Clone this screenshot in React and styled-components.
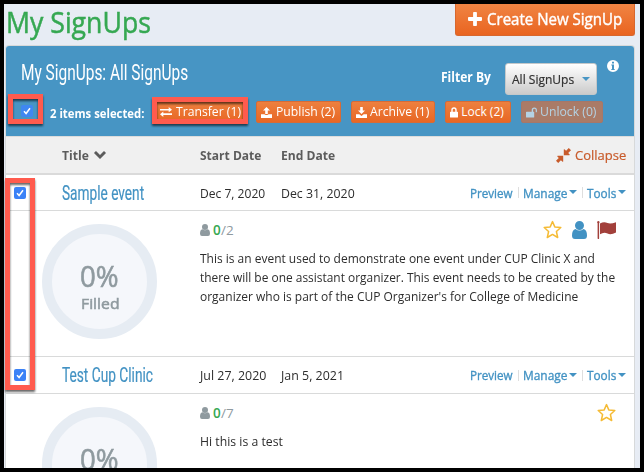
import React, { useLayoutEffect, useRef } from "react";
import styled, { createGlobalStyle } from "styled-components";

const GlobalStyle = createGlobalStyle`
  * { box-sizing: border-box; }
  body { margin: 0; background: #000; font-family: "Open Sans", "Noto Sans", sans-serif; color: #2d2d2d; }
`;

/* ---------- text ---------- */

const TextBox = styled.span`
  display: block;
  flex: none;
  width: ${(p) => p.$w}px;
  height: ${(p) => p.$lh}px;
  line-height: ${(p) => p.$lh}px;
  font-size: ${(p) => p.$size}px;
  font-weight: ${(p) => p.$weight};
  font-family: ${(p) => (p.$display ? '"Roboto", "Open Sans", sans-serif' : '"Open Sans", "Noto Sans", sans-serif')};
  -webkit-text-stroke: ${(p) => p.$stroke || 0}px currentColor;
  color: ${(p) => p.$color || "inherit"};
  white-space: nowrap;
`;

const TextRun = styled.span`
  display: inline-block;
  transform-origin: 0 50%;
`;

/* One line of text condensed to the given width. */
function Label({ w, size = 13, lh = 20, weight = 400, stroke, color, display, children }) {
  const ref = useRef(null);
  useLayoutEffect(() => {
    const el = ref.current;
    const fit = () => {
      el.style.transform = `scaleX(${w / el.offsetWidth})`;
    };
    fit();
    document.fonts.ready.then(fit);
  }, [w, size, children]);
  return (
    <TextBox $w={w} $size={size} $lh={lh} $weight={weight} $stroke={stroke} $color={color} $display={display}>
      <TextRun ref={ref}>{children}</TextRun>
    </TextBox>
  );
}

/* ---------- icons ---------- */

const Svg = styled.svg`
  display: block;
  flex: none;
  fill: currentColor;
`;

const PlusIcon = () => (
  <Svg width="14" height="14" viewBox="0 0 14 14"><path d="M5.100.8Q5.100 0 5.900 0h2.200q.8 0 .8.8v4.300h4.300q.8 0 .8.8v2.200q0 .8-.8.8H8.900v4.300q0 .8-.8.8H5.900q-.8 0-.8-.8V8.900H.8Q0 8.900 0 8.100V5.900q0-.8.8-.8h4.300z" /></Svg>
);
const InfoIcon = () => (
  <Svg width="12" height="12" viewBox="0 0 12 12"><path fillRule="evenodd" d="M6 0a6 6 0 1 1 0 12A6 6 0 0 1 6 0zM5 1.800v1.600h2V1.800zM4.300 4.500v1.100H5v3.300h-.7V10h3.400V8.900H7V4.500z" /></Svg>
);
const TransferIcon = () => (
  <Svg width="12" height="10" viewBox="0 0 12 10"><path d="M0 2h8.700V0L12 2.800 8.700 5.300V3.600H0zM12 6.300H3.300V4.600L0 7.200 3.300 10V8H12z" /></Svg>
);
const UploadIcon = () => (
  <Svg width="11" height="11" viewBox="0 0 11 11"><path d="M5.500 0 9 3.600H6.800V7H4.200V3.600H2zM0 7.300h3.500c.2 1 3.800 1 4 0H11V11H0z" /></Svg>
);
const DownloadIcon = () => (
  <Svg width="11" height="11" viewBox="0 0 11 11"><path d="M4.200 0h2.600v3.400H9L5.500 7 2 3.400h2.200zM0 7.300h3.300L5.500 9l2.200-1.700H11V11H0z" /></Svg>
);
const LockIcon = () => (
  <Svg width="8" height="11" viewBox="0 0 8 11"><path fillRule="evenodd" d="M1.300 4.700V3a2.700 2.700 0 0 1 5.400 0v1.700H7.400q.6 0 .6.600v4.600q0 .6-.6.600H.6q-.6 0-.6-.6V5.300q0-.6.6-.6zM2.700 4.700h2.600V3a1.300 1.300 0 0 0-2.600 0z" /></Svg>
);
const UnlockIcon = () => (
  <Svg width="11" height="11" viewBox="0 0 11 11"><path d="M5.700 4.700V3a2.600 2.600 0 0 1 5.200 0v1.800q0 .5-.6.500t-.6-.5V3a1.300 1.300 0 0 0-2.600 0v1.700h.5q.6 0 .6.600v4.600q0 .6-.6.600h-7q-.6 0-.6-.6V5.300q0-.6.6-.6z" /></Svg>
);
const ChevronIcon = () => (
  <Svg width="12" height="8" viewBox="0 0 12 8"><path d="M6 7.900.2 2.300Q0 2 .2 1.700L1.600.3Q2 .1 2.300.3L6 4 9.700.3q.3-.2.6 0l1.500 1.400q.2.300 0 .6z" /></Svg>
);
const CollapseIcon = () => (
  <Svg width="15" height="15" viewBox="0 0 15 15"><path d="M7.800 7.200V1.600q.4-.6.900-.1l1.400 1.300L12.800 0 15 2.200 12.200 4.900l1.300 1.300q.5.600-.1 1zM7.200 7.800v5.600q-.4.600-.9.100l-1.400-1.300L2.200 15 0 12.800l2.800-2.700L1.500 8.800q-.5-.6.100-1z" /></Svg>
);
const CaretIcon = () => (
  <Svg width="8" height="4" viewBox="0 0 8 4"><path d="M0 0h8L4 4z" /></Svg>
);
const PersonIcon = ({ w, h }) => (
  <Svg width={w} height={h} viewBox="0 0 15 18" preserveAspectRatio="none"><path d="M7.500 0a4.500 4.500 0 1 1 0 9 4.500 4.500 0 0 1 0-9zM3.500 8Q7.500 11 11.500 8 15 8.800 15 14.500 15 18 12 18H3q-3 0-3-3.500Q0 8.800 3.500 8z" /></Svg>
);
const StarIcon = () => (
  <Svg width="19" height="19" viewBox="0 0 19 19"><path fill="none" stroke="currentColor" strokeWidth="1.500" strokeLinejoin="round" d="m9.500 1.600 2.300 5.300 6 .6-4.400 4 1.300 6-5.200-3.100-5.200 3.100 1.300-6-4.400-4 6-.6z" /></Svg>
);
const FlagIcon = () => (
  <Svg width="19" height="18" viewBox="0 0 19 18"><path d="M1.300 0a1.300 1.300 0 0 1 .8 2.300V17.500q0 .5-.8.500t-.7-.5V2.300A1.300 1.300 0 0 1 1.300 0zM3 2.600Q7 .2 10.500 2.100 13.500 3.400 19 1.200V11.500q-5 2.700-8.500 1.100Q7 10.700 3 13.300z" /></Svg>
);
const TickIcon = () => (
  <Svg width="8" height="8" viewBox="0 0 8 8"><path fill="none" stroke="#fff" strokeWidth="1.500" d="M1 4.200 3.100 6.500 7 1.200" /></Svg>
);

/* ---------- page ---------- */

const Screen = styled.div`
  position: relative;
  width: 644px;
  height: 472px;
  overflow: hidden;
  border: 4px solid #000;
  background: #e7ecf4;
`;

const PageHeader = styled.header`
  display: flex;
  justify-content: space-between;
  height: 41px;
  padding: 0 5px 0 2px;
`;

const PageTitle = styled.h1`
  margin: 0;
`;

const CreateButton = styled.button`
  display: flex;
  align-items: center;
  gap: 5px;
  width: 180px;
  height: 32px;
  padding: 0 0 1px 12px;
  border: 1px solid #d7672e;
  border-top: 0;
  border-radius: 0 0 3px 3px;
  background: linear-gradient(#f08443, #e96420);
  color: #fff;
`;

const Panel = styled.main`
  width: 630px;
  height: 430px;
  margin-left: 1px;
  border: 1px solid #d7d9da;
  border-bottom: 0;
  border-radius: 4px 4px 0 0;
  background: #fff;
`;

const Banner = styled.section`
  height: 90px;
  border-radius: 3px 3px 0 0;
  background: #4795c4;
  color: #fff;
`;

const BannerTop = styled.div`
  display: flex;
  align-items: flex-start;
  height: 55px;
  padding: 0 15px;
`;

const BannerTitle = styled.h2`
  margin: 11px 253px 0 0;
`;

const FilterLabel = styled.div`
  margin: 21px 14px 0 0;
`;

const Select = styled.button`
  display: flex;
  align-items: center;
  gap: 8px;
  width: 92px;
  height: 32px;
  margin: 17px 10px 0 0;
  padding: 0 0 0 6px;
  border: 1px solid #c4c8ca;
  border-radius: 3px;
  background: linear-gradient(#fff, #cbcbcb);
  color: #4795c4;
`;

const InfoSlot = styled.div`
  margin-top: 14px;
`;

const ActionRow = styled.div`
  display: flex;
  align-items: center;
  height: 22px;
  padding-left: 15px;
`;

const SelectedCount = styled.div`
  margin: 1px 11px 0 17px;
`;

const ActionButton = styled.button`
  display: flex;
  align-items: center;
  gap: ${(p) => p.$gap || 3}px;
  flex: none;
  width: ${(p) => p.$w}px;
  height: 22px;
  margin-right: 10px;
  padding: 0 0 0 4px;
  border: 1px solid ${(p) => (p.$off ? "#a67769" : "#d76b36")};
  border-radius: 2px;
  background: ${(p) => (p.$off ? "#aa7b67" : "linear-gradient(#ed803f, #e86724)")};
  color: ${(p) => (p.$off ? "#b4d3e4" : "#fff")};
`;

const Check = styled.span`
  display: flex;
  align-items: center;
  justify-content: center;
  flex: none;
  width: 12px;
  height: 12px;
  border-radius: 2px;
  background: ${(p) => (p.$shaded ? "#3f87f2" : "#3b82f7")};
  margin-top: ${(p) => (p.$shaded ? -3 : 0)}px;
`;

const columns = "56px 138px 81px 1fr auto";

const TableHead = styled.div`
  display: grid;
  grid-template-columns: ${columns};
  align-items: center;
  height: 39px;
  padding-right: 8px;
  border-top: 1px solid #dcdcdc;
  border-bottom: 2px solid #dadada;
  background: #f0f0f0;
  color: #5c5c5c;
`;

const HeadCell = styled.div`
  display: flex;
  align-items: center;
  gap: ${(p) => p.$gap || 5}px;
  color: ${(p) => p.$color || "inherit"};
`;

const EventRow = styled.div`
  display: grid;
  grid-template-columns: ${columns};
  align-items: center;
  height: ${(p) => p.$h}px;
  padding-right: 8px;
  border-bottom: 1px solid #d9dada;
`;

const CheckCell = styled.div`
  padding-left: 8px;
`;

const Links = styled.nav`
  display: flex;
  align-items: center;
  color: #4292c3;
`;

const Caret = styled.span`
  margin: -1px 0 0 2px;
`;

const Divider = styled.span`
  width: 1px;
  height: 11px;
  margin: 0 4px 0 5px;
  background: #dedede;
`;

const EventDetail = styled.section`
  display: flex;
  height: 146px;
  padding: 13px 18px 0 36px;
  border-bottom: 1px solid #d9dada;
`;

const Ring = styled.div`
  display: flex;
  flex-direction: column;
  align-items: center;
  flex: none;
  width: 115px;
  height: 115px;
  margin-right: 43px;
  padding-top: 24px;
  border: 10px solid #e6ecf3;
  border-radius: 50%;
  background: #f5f7fb;
`;

const DetailBody = styled.div`
  flex: 1;
  min-width: 0;
`;

const DetailTop = styled.div`
  display: flex;
  justify-content: space-between;
  height: 25px;
  margin-top: -5px;
`;

const Count = styled.div`
  display: flex;
  align-items: center;
  height: 22px;
  gap: 3px;
  color: #8f9a9f;
`;

const CountText = styled.div`
  display: flex;
`;

const Badges = styled.div`
  display: flex;
  align-items: center;
  height: 21px;
  gap: ${(p) => p.$gap || 0}px;
`;

const Tint = styled.span`
  color: ${(p) => p.$color};
`;

const Highlight = styled.div`
  position: absolute;
  left: ${(p) => p.$x}px;
  top: ${(p) => p.$y}px;
  width: ${(p) => p.$w}px;
  height: ${(p) => p.$h}px;
  border: 5px solid #ff5b4e;
  filter: drop-shadow(0 2px 1px rgba(0, 0, 0, 0.6));
`;

const Description = styled.div`
  padding-top: 5px;
`;

const events = [
  {
    title: "Sample event", titleW: 82, start: "Dec 7, 2020", startW: 65, end: "Dec 31, 2020", endW: 74,
    total: "/2", h: 36, full: true,
    lines: [
      ["This is an event used to demonstrate one event under CUP Clinic X and", 395],
      ["there will be one assistant organizer. This event needs to be created by the", 415],
      ["organizer who is part of the CUP Organizer's for College of Medicine", 378],
    ],
  },
  {
    title: "Test Cup Clinic", titleW: 91, start: "Jul 27, 2020", startW: 66, end: "Jan 5, 2021", endW: 63,
    total: "/7", h: 37, full: false,
    lines: [["Hi this is a test", 83]],
  },
];

function Event({ e }) {
  return (
    <>
      <EventRow $h={e.h}>
        <CheckCell><Check><TickIcon /></Check></CheckCell>
        <Label w={e.titleW} size={20.5} lh={26} stroke={0.2} display color="#4292c3">{e.title}</Label>
        <Label w={e.startW}>{e.start}</Label>
        <Label w={e.endW}>{e.end}</Label>
        <Links>
          <Label w={43} stroke={0.35}>Preview</Label>
          <Divider />
          <Label w={44} stroke={0.35}>Manage</Label>
          <Caret><CaretIcon /></Caret>
          <Divider />
          <Label w={29} stroke={0.35}>Tools</Label>
          <Caret><CaretIcon /></Caret>
        </Links>
      </EventRow>
      <EventDetail>
        <Ring>
          <Label w={39} size={29} lh={35} stroke={0.6} color="#8f9a9f">0%</Label>
          {e.full && <Label w={38} size={14.5} lh={21} stroke={0.5} color="#8f9a9f">Filled</Label>}
        </Ring>
        <DetailBody>
          <DetailTop>
            <Count>
              <PersonIcon w={10} h={12} />
              <CountText>
                <Label w={8} size={13.5} weight={600} color="#36a852">0</Label>
                <Label w={13} size={13.5}>{e.total}</Label>
              </CountText>
            </Count>
            <Badges $gap={10}>
              <Tint $color="#f5bb35"><StarIcon /></Tint>
              {e.full && <Tint $color="#4292c3"><PersonIcon w={15} h={18} /></Tint>}
              {e.full && <Tint $color="#a2403b"><FlagIcon /></Tint>}
            </Badges>
          </DetailTop>
          <Description>
            {e.lines.map(([text, w]) => <Label key={text} w={w} lh={19}>{text}</Label>)}
          </Description>
        </DetailBody>
      </EventDetail>
    </>
  );
}

export default function App() {
  return (
    <>
      <GlobalStyle />
      <Screen>
        <PageHeader>
          <PageTitle><Label w={145} size={28.5} lh={36} stroke={0.5} color="#36a852">My SignUps</Label></PageTitle>
          <CreateButton>
            <PlusIcon />
            <Label w={135} size={15.5} lh={24} stroke={0.4}>Create New SignUp</Label>
          </CreateButton>
        </PageHeader>
        <Panel>
          <Banner>
            <BannerTop>
              <BannerTitle><Label w={167} size={22} lh={31} display>My SignUps: All SignUps</Label></BannerTitle>
              <FilterLabel><Label w={50} size={13.5} weight={700}>Filter By</Label></FilterLabel>
              <Select>
                <Label w={62} stroke={0.2} color="#303030">All SignUps</Label>
                <CaretIcon />
              </Select>
              <InfoSlot><InfoIcon /></InfoSlot>
            </BannerTop>
            <ActionRow>
              <Check $shaded><TickIcon /></Check>
              <SelectedCount><Label w={94} weight={700}>2 items selected:</Label></SelectedCount>
              <ActionButton $w={91}><TransferIcon /><Label w={65} size={12}>Transfer (1)</Label></ActionButton>
              <ActionButton $w={85} $gap={4}><UploadIcon /><Label w={59} size={12}>Publish (2)</Label></ActionButton>
              <ActionButton $w={84}><DownloadIcon /><Label w={59} size={12}>Archive (1)</Label></ActionButton>
              <ActionButton $w={66}><LockIcon /><Label w={43} size={12}>Lock (2)</Label></ActionButton>
              <ActionButton $w={82} $off><UnlockIcon /><Label w={56} size={12}>Unlock (0)</Label></ActionButton>
            </ActionRow>
          </Banner>
          <TableHead>
            <span />
            <HeadCell><Label w={27} weight={700}>Title</Label><ChevronIcon /></HeadCell>
            <Label w={61} weight={700}>Start Date</Label>
            <Label w={54} weight={700}>End Date</Label>
            <HeadCell $color="#c85b2b" $gap={4}><CollapseIcon /><Label w={51} size={13.5} stroke={0.2}>Collapse</Label></HeadCell>
          </TableHead>
          {events.map((e) => <Event key={e.title} e={e} />)}
        </Panel>
        <Highlight $x={4} $y={90} $w={35} $h={30} />
        <Highlight $x={148} $y={93} $w={96} $h={27} />
        <Highlight $x={1} $y={174} $w={30} $h={212} />
      </Screen>
    </>
  );
}
